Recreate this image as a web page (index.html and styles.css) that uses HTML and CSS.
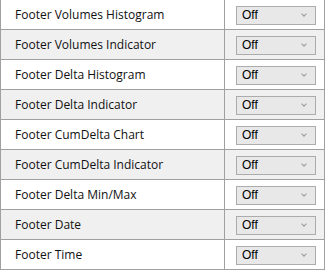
FILE: index.html
```html
<!DOCTYPE html>
<html lang="en">
<head>
    <meta charset="UTF-8">
    <title>Footer Settings</title>
    <link rel="stylesheet" href="styles.css">
</head>
<body>
    <table class="props">
        <tr><td class="name">Footer Volumes Histogram</td><td class="val"><div class="sel">Off<span class="arrow"></span></div></td></tr>
        <tr class="alt"><td class="name">Footer Volumes Indicator</td><td class="val"><div class="sel">Off<span class="arrow"></span></div></td></tr>
        <tr><td class="name">Footer Delta Histogram</td><td class="val"><div class="sel">Off<span class="arrow"></span></div></td></tr>
        <tr class="alt"><td class="name">Footer Delta Indicator</td><td class="val"><div class="sel">Off<span class="arrow"></span></div></td></tr>
        <tr><td class="name">Footer CumDelta Chart</td><td class="val"><div class="sel">Off<span class="arrow"></span></div></td></tr>
        <tr class="alt"><td class="name">Footer CumDelta Indicator</td><td class="val"><div class="sel">Off<span class="arrow"></span></div></td></tr>
        <tr><td class="name">Footer Delta Min/Max</td><td class="val"><div class="sel">Off<span class="arrow"></span></div></td></tr>
        <tr class="alt"><td class="name">Footer Date</td><td class="val"><div class="sel">Off<span class="arrow"></span></div></td></tr>
        <tr><td class="name">Footer Time</td><td class="val"><div class="sel">Off<span class="arrow"></span></div></td></tr>
    </table>
</body>
</html>
```
FILE: styles.css
```css
body {
    margin: 0;
    padding: 0;
    background: #fff;
    font-family: 'Open Sans', sans-serif;
    font-size: 12px;
    color: #111;
}
.props {
    border-collapse: collapse;
    width: 324px;
    margin-top: -1px;
    table-layout: fixed;
}
.props td {
    border: 1px solid #a0a0a0;
    height: 30px;
    padding: 0;
    box-sizing: border-box;
}
.props tr.alt td {
    background: #f0f0f0;
}
.name {
    width: 224px;
    padding-left: 14px !important;
}
.val {
    width: 100px;
}
.sel {
    position: relative;
    width: 80px;
    height: 19px;
    margin-left: 11px;
    margin-top: 1px;
    box-sizing: border-box;
    border: 1px solid #acacac;
    background: #e8e8e8;
    padding-left: 5px;
    line-height: 17px;
    font-family: 'Liberation Sans', sans-serif;
    font-size: 12px;
    color: #000;
}
.arrow {
    position: absolute;
    right: 9px;
    top: 5px;
    width: 3px;
    height: 3px;
    border-right: 1px solid #999;
    border-bottom: 1px solid #999;
    transform: rotate(45deg);
}
```
